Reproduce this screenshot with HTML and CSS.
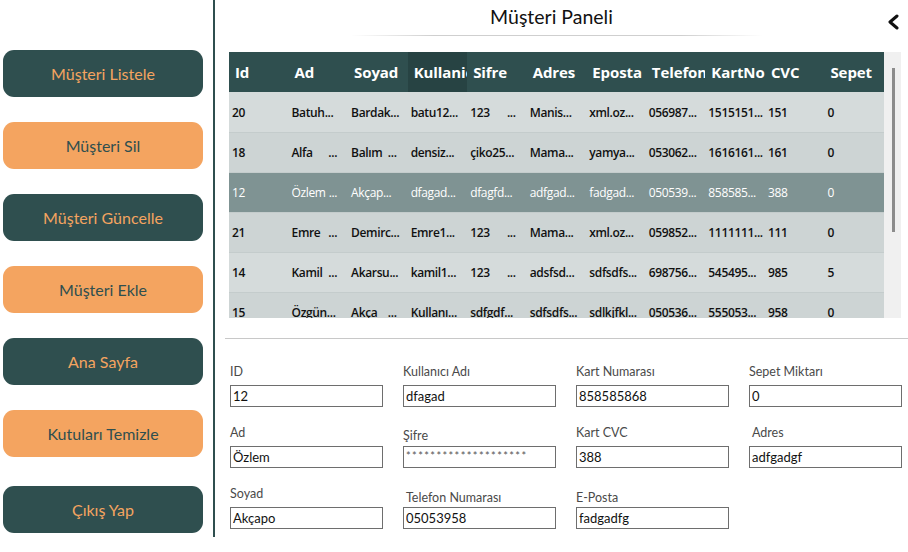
FILE: index.html
```html
<!DOCTYPE html>
<html lang="tr">
<head>
<meta charset="utf-8">
<title>Müşteri Paneli</title>
<link rel="stylesheet" href="styles.css">
</head>
<body>
<aside class="sidebar">
  <button class="btn dark">Müşteri Listele</button>
  <button class="btn light">Müşteri Sil</button>
  <button class="btn dark">Müşteri Güncelle</button>
  <button class="btn light">Müşteri Ekle</button>
  <button class="btn dark">Ana Sayfa</button>
  <button class="btn light">Kutuları Temizle</button>
  <button class="btn dark last">Çıkış Yap</button>
</aside>
<main class="main">
  <header class="title-bar">
    <h1 class="title">Müşteri Paneli</h1>
    <div class="title-line"></div>
    <svg class="back" width="14" height="16" viewBox="0 0 14 16"><polyline points="10,2 3,8 10,14" fill="none" stroke="#111" stroke-width="3" stroke-linecap="round" stroke-linejoin="round"/></svg>
  </header>
  <section class="grid-wrap">
    <div class="grid">
      <div class="row head">
        <div class="c">Id</div><div class="c">Ad</div><div class="c">Soyad</div><div class="c sorted">Kullanic</div><div class="c">Sifre</div><div class="c">Adres</div><div class="c">Eposta</div><div class="c">Telefon</div><div class="c">KartNo</div><div class="c">CVC</div><div class="c">Sepet</div>
      </div>
      <div class="row odd">
        <div class="c">20</div><div class="c">Batuh...</div><div class="c">Bardak...</div><div class="c">batu12...</div><div class="c">123<i>...</i></div><div class="c">Manis...</div><div class="c">xml.oz...</div><div class="c">056987...</div><div class="c">1515151...</div><div class="c">151</div><div class="c">0</div>
      </div>
      <div class="row even">
        <div class="c">18</div><div class="c">Alfa<i>...</i></div><div class="c">Balım<i>...</i></div><div class="c">densiz...</div><div class="c">çiko25...</div><div class="c">Mama...</div><div class="c">yamya...</div><div class="c">053062...</div><div class="c">1616161...</div><div class="c">161</div><div class="c">0</div>
      </div>
      <div class="row sel">
        <div class="c">12</div><div class="c">Özlem<i>...</i></div><div class="c">Akçap...</div><div class="c">dfagad...</div><div class="c">dfagfd...</div><div class="c">adfgad...</div><div class="c">fadgad...</div><div class="c">050539...</div><div class="c">858585...</div><div class="c">388</div><div class="c">0</div>
      </div>
      <div class="row even">
        <div class="c">21</div><div class="c">Emre<i>...</i></div><div class="c">Demirc...</div><div class="c">Emre1...</div><div class="c">123<i>...</i></div><div class="c">Mama...</div><div class="c">xml.oz...</div><div class="c">059852...</div><div class="c">1111111...</div><div class="c">111</div><div class="c">0</div>
      </div>
      <div class="row odd">
        <div class="c">14</div><div class="c">Kamil<i>...</i></div><div class="c">Akarsu...</div><div class="c">kamil1...</div><div class="c">123<i>...</i></div><div class="c">adsfsd...</div><div class="c">sdfsdfs...</div><div class="c">698756...</div><div class="c">545495...</div><div class="c">985</div><div class="c">5</div>
      </div>
      <div class="row even">
        <div class="c">15</div><div class="c">Özgün...</div><div class="c">Akça<i>...</i></div><div class="c">Kullanı...</div><div class="c">sdfgdf...</div><div class="c">sdfsdfs...</div><div class="c">sdlkjfkl...</div><div class="c">050536...</div><div class="c">555053...</div><div class="c">958</div><div class="c">0</div>
      </div>
    </div>
    <div class="scrollbar"><div class="thumb"></div></div>
  </section>
  <div class="divider"></div>
  <form class="form">
    <div class="field"><label>ID</label><input type="text" value="12"></div>
    <div class="field"><label>Kullanıcı Adı</label><input type="text" value="dfagad"></div>
    <div class="field"><label>Kart Numarası</label><input type="text" value="858585868"></div>
    <div class="field"><label>Sepet Miktarı</label><input type="text" value="0"></div>
    <div class="field"><label>Ad</label><input type="text" value="Özlem"></div>
    <div class="field"><label class="down3">Şifre</label><input type="text" class="pw" value="********************"></div>
    <div class="field"><label>Kart CVC</label><input type="text" value="388"></div>
    <div class="field"><label class="shift">Adres</label><input type="text" value="adfgadgf"></div>
    <div class="field"><label>Soyad</label><input type="text" value="Akçapo"></div>
    <div class="field"><label class="down4 shift">Telefon Numarası</label><input type="text" value="05053958"></div>
    <div class="field"><label class="down4">E-Posta</label><input type="text" value="fadgadfg"></div>
  </form>
</main>
</body>
</html>
```
FILE: styles.css
```css
* { box-sizing: border-box; }
html, body { margin: 0; padding: 0; background: #fff; }
body {
  display: flex;
  width: 908px;
  height: 552px;
  overflow: hidden;
  font-family: "Lato", sans-serif;
}
.sidebar {
  width: 215px;
  height: 537px;
  border-right: 2px solid #2f4f4f;
  padding: 50px 0 0 3px;
  display: flex;
  flex-direction: column;
  gap: 25px;
  flex: none;
}
.btn {
  width: 200px;
  height: 47px;
  border: none;
  border-radius: 11px;
  font-family: "Lato", sans-serif;
  font-size: 16px;
  font-weight: 400;
  letter-spacing: 0;
  padding: 0;
}
.btn.dark { background: #2f4f4f; color: #f4a460; }
.btn.light { background: #f4a460; color: #2f4f4f; }
.btn.last { margin-top: 4px; }

.main {
  flex: 1;
  position: relative;
  padding-left: 14px;
}
.title-bar {
  height: 52px;
  width: 655px;
  display: flex;
  flex-direction: column;
  align-items: center;
}
.title {
  margin: 5px 10px 0 0;
  font-family: "Lato", sans-serif;
  font-weight: 400;
  font-size: 19.5px;
  line-height: 24px;
  color: #111;
  letter-spacing: 0;
}
.title-line {
  margin-top: 6px;
  width: 412px;
  height: 1px;
  background: linear-gradient(to right, rgba(200,200,200,0), #cfcfcf 20%, #cfcfcf 80%, rgba(200,200,200,0));
}
.back {
  position: absolute;
  right: 7px;
  top: 14px;
}
.grid-wrap {
  display: flex;
  height: 266px;
  width: 672px;
  overflow: hidden;
}
.grid {
  width: 655px;
  font-family: "Open Sans", "Noto Sans", sans-serif;
}
.row {
  display: grid;
  grid-template-columns: repeat(11, 1fr);
  height: 40px;
  align-items: stretch;
}
.row .c {
  display: flex;
  align-items: center;
  padding-left: 3px;
  padding-right: 11px;
  white-space: nowrap;
  overflow: hidden;
  font-size: 12px;
  font-weight: 600;
  color: #111;
  letter-spacing: -0.35px;
}
.row .c i { font-style: normal; margin-left: auto; }
.row.head { background: #2f4f4f; }
.row.head .c {
  color: #fff;
  font-weight: 700;
  font-size: 15px;
  padding-left: 6px;
  padding-right: 0;
  letter-spacing: -0.1px;
}
.row.head .c.sorted { background: #274343; }
.row.odd { background: #d5dbdb; border-top: 1px solid #c4cccc; }
.row.even { background: #cdd4d4; border-top: 1px solid #c4cccc; }
.row.head + .row { border-top: none; }
.row.sel { background: #7f9393; border-top: 1px solid #c4cccc; }
.row.sel .c { color: #fff; font-weight: 500; }
.scrollbar {
  width: 17px;
  background: #f0f0f0;
  position: relative;
  flex: none;
}
.thumb {
  position: absolute;
  left: 8px;
  top: 16px;
  width: 3px;
  height: 164px;
  background: #8c8c8c;
}
.divider {
  margin: 20px 0 0 -4px;
  height: 1px;
  background: #c8c8c8;
}
.form {
  display: grid;
  grid-template-columns: repeat(4, 153px);
  column-gap: 20px;
  row-gap: 18px;
  margin: 25px 0 0 1px;
}
.field { display: flex; flex-direction: column; }
.field label {
  font-family: "Lato", sans-serif;
  font-size: 12.5px;
  line-height: 16px;
  height: 16px;
  margin-bottom: 5px;
  color: #4a4a4a;
}
.field label.down3 { transform: translateY(3px); }
.field label.down4 { transform: translateY(4px); }
.field label.shift { padding-left: 3px; }
.field input {
  height: 22px;
  width: 153px;
  border: 1px solid #6e6e6e;
  border-radius: 0;
  padding: 0 2px;
  font-family: "Lato", sans-serif;
  font-size: 13px;
  line-height: 20px;
  color: #111;
  background: #fff;
  outline: none;
}
.field input.pw { color: #555; font-size: 11px; letter-spacing: 1.4px; padding-bottom: 3px; }
```
